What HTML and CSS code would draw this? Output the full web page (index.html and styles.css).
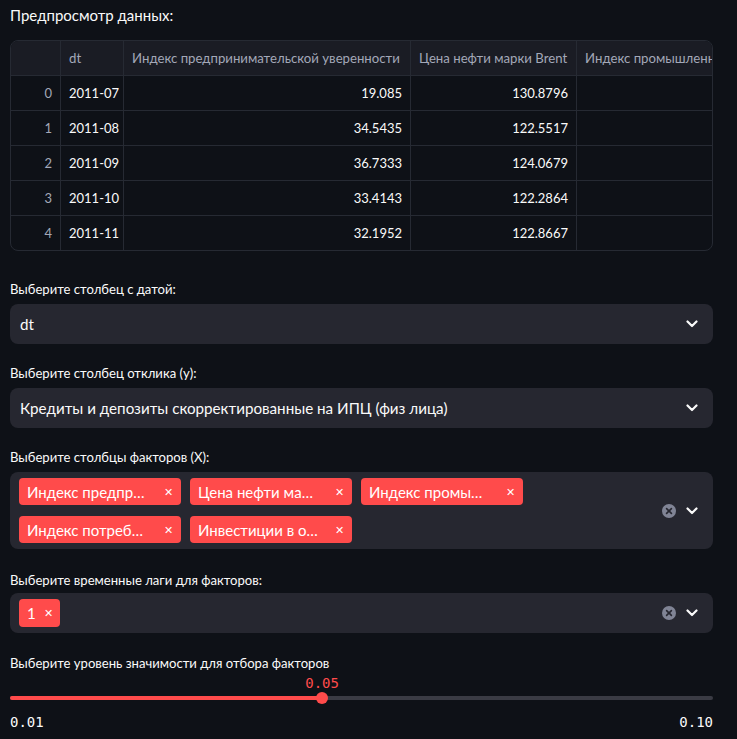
FILE: index.html
```html
<!DOCTYPE html>
<html lang="ru">
<head>
<meta charset="utf-8">
<title>Предпросмотр</title>
<link rel="stylesheet" href="styles.css">
</head>
<body>
<main class="page">
  <p class="title">Предпросмотр данных:</p>

  <div class="table">
    <div class="row head">
      <div class="cell idx"></div>
      <div class="cell c-dt">dt</div>
      <div class="cell c-a">Индекс предпринимательской уверенности</div>
      <div class="cell c-b">Цена нефти марки Brent</div>
      <div class="cell c-c">Индекс промышленного производства</div>
    </div>
    <div class="row"><div class="cell idx">0</div><div class="cell c-dt">2011-07</div><div class="cell c-a num">19.085</div><div class="cell c-b num">130.8796</div><div class="cell c-c"></div></div>
    <div class="row"><div class="cell idx">1</div><div class="cell c-dt">2011-08</div><div class="cell c-a num">34.5435</div><div class="cell c-b num">122.5517</div><div class="cell c-c"></div></div>
    <div class="row"><div class="cell idx">2</div><div class="cell c-dt">2011-09</div><div class="cell c-a num">36.7333</div><div class="cell c-b num">124.0679</div><div class="cell c-c"></div></div>
    <div class="row"><div class="cell idx">3</div><div class="cell c-dt">2011-10</div><div class="cell c-a num">33.4143</div><div class="cell c-b num">122.2864</div><div class="cell c-c"></div></div>
    <div class="row last"><div class="cell idx">4</div><div class="cell c-dt">2011-11</div><div class="cell c-a num">32.1952</div><div class="cell c-b num">122.8667</div><div class="cell c-c"></div></div>
  </div>

  <section class="field f1">
    <label class="label">Выберите столбец с датой:</label>
    <div class="select">
      <span class="value">dt</span>
      <svg class="chev" width="12" height="8" viewBox="0 0 12 8"><path d="M1.5 1.5 6 6l4.5-4.5" fill="none" stroke="#fafafa" stroke-width="2.2" stroke-linecap="round" stroke-linejoin="round"/></svg>
    </div>
  </section>

  <section class="field">
    <label class="label">Выберите столбец отклика (y):</label>
    <div class="select">
      <span class="value">Кредиты и депозиты скорректированные на ИПЦ (физ лица)</span>
      <svg class="chev" width="12" height="8" viewBox="0 0 12 8"><path d="M1.5 1.5 6 6l4.5-4.5" fill="none" stroke="#fafafa" stroke-width="2.2" stroke-linecap="round" stroke-linejoin="round"/></svg>
    </div>
  </section>

  <section class="field">
    <label class="label">Выберите столбцы факторов (X):</label>
    <div class="multi">
      <div class="tags">
        <span class="tag wide"><span class="tag-text">Индекс предпр…</span><span class="x">✕</span></span>
        <span class="tag wide"><span class="tag-text">Цена нефти ма…</span><span class="x">✕</span></span>
        <span class="tag wide"><span class="tag-text">Индекс промы…</span><span class="x">✕</span></span>
        <span class="tag wide"><span class="tag-text">Индекс потреб…</span><span class="x">✕</span></span>
        <span class="tag wide"><span class="tag-text">Инвестиции в о…</span><span class="x">✕</span></span>
      </div>
      <div class="controls">
        <svg class="clear" width="16" height="16" viewBox="0 0 16 16"><circle cx="8" cy="8" r="7" fill="#808495"/><path d="M5.6 5.6l4.8 4.8M10.4 5.6l-4.8 4.8" stroke="#262730" stroke-width="1.6" stroke-linecap="round"/></svg>
        <svg class="chev" width="12" height="8" viewBox="0 0 12 8"><path d="M1.5 1.5 6 6l4.5-4.5" fill="none" stroke="#fafafa" stroke-width="2.2" stroke-linecap="round" stroke-linejoin="round"/></svg>
      </div>
    </div>
  </section>

  <section class="field f4">
    <label class="label">Выберите временные лаги для факторов:</label>
    <div class="multi">
      <div class="tags">
        <span class="tag small"><span class="tag-text">1</span><span class="x">✕</span></span>
      </div>
      <div class="controls">
        <svg class="clear" width="16" height="16" viewBox="0 0 16 16"><circle cx="8" cy="8" r="7" fill="#808495"/><path d="M5.6 5.6l4.8 4.8M10.4 5.6l-4.8 4.8" stroke="#262730" stroke-width="1.6" stroke-linecap="round"/></svg>
        <svg class="chev" width="12" height="8" viewBox="0 0 12 8"><path d="M1.5 1.5 6 6l4.5-4.5" fill="none" stroke="#fafafa" stroke-width="2.2" stroke-linecap="round" stroke-linejoin="round"/></svg>
      </div>
    </div>
  </section>

  <section class="field slider-field">
    <label class="label">Выберите уровень значимости для отбора факторов</label>
    <div class="slider">
      <div class="track">
        <div class="fill" style="width: 44.4%"></div>
        <div class="thumb" style="left: 44.4%"><span class="thumb-value">0.05</span></div>
      </div>
      <div class="ticks"><span>0.01</span><span>0.10</span></div>
    </div>
  </section>
</main>
</body>
</html>
```

FILE: styles.css
```css
* { box-sizing: border-box; }
html, body {
  margin: 0;
  padding: 0;
  background: #0e1117;
}
body {
  color: #fafafa;
  font-family: Lato, Roboto, "Noto Sans", sans-serif;
}
.page {
  padding: 0 24px 0 10px;
  display: flex;
  flex-direction: column;
}
.title {
  margin: 3px 0 0;
  font-size: 15px;
  line-height: 24px;
}
.table {
  margin-top: 13px;
  border: 1px solid #262a33;
  border-radius: 8px;
  overflow: hidden;
  font-size: 13px;
}
.row {
  display: grid;
  grid-template-columns: 50px 63px 287px 166px 1fr;
  height: 35px;
  border-bottom: 1px solid #262a33;
}
.row.head {
  height: 35px;
  background: #1a1c24;
  color: #a3a8b8;
  font-size: 13.2px;
}
.row.last { border-bottom: none; height: 34px; }
.cell {
  display: flex;
  align-items: center;
  padding: 0 8px;
  border-right: 1px solid #262a33;
  white-space: nowrap;
  overflow: hidden;
}
.cell.c-c { border-right: none; }
.cell.idx { justify-content: flex-end; color: #a3a8b8; }
.row.head .cell.idx { justify-content: flex-start; }
.cell.num { justify-content: flex-end; }

.field {
  display: flex;
  flex-direction: column;
  margin-top: 19px;
}
.field.f1 { margin-top: 28px; }
.field.f4 { margin-top: 21px; }
.label {
  font-size: 13.1px;
  line-height: 20px;
  margin-bottom: 5px;
}
.field.f4 .label { margin-bottom: 3px; }
.select {
  height: 40px;
  background: #262730;
  border-radius: 8px;
  display: flex;
  align-items: center;
  justify-content: space-between;
  padding: 0 15px 0 10px;
}
.value { font-size: 15.2px; }
.multi {
  background: #262730;
  border-radius: 8px;
  display: flex;
  align-items: center;
  justify-content: space-between;
  padding: 6px 15px 6px 9px;
  min-height: 40px;
}
.tags {
  display: flex;
  flex-wrap: wrap;
  gap: 11px 9px;
  width: 520px;
}
.tag {
  background: #ff4b4b;
  border-radius: 4px;
  height: 27px;
  display: flex;
  align-items: center;
  justify-content: space-between;
  padding: 0 8px 0 8px;
  font-size: 15px;
  color: #fff;
}
.tag.wide { width: 162px; }
.tag.small { width: 41px; height: 28px; }
.x { font-size: 11px; margin-left: 8px; }
.controls {
  display: flex;
  align-items: center;
  gap: 9px;
}
.slider-field { margin-top: 20px; }
.slider {
  padding-top: 18px;
}
.track {
  position: relative;
  height: 4px;
  border-radius: 2px;
  background: #3a3b44;
}
.fill {
  height: 4px;
  border-radius: 2px;
  background: #ff4b4b;
}
.thumb {
  position: absolute;
  top: -4px;
  width: 12px;
  height: 12px;
  margin-left: -6px;
  border-radius: 50%;
  background: #ff4b4b;
}
.thumb-value {
  position: absolute;
  bottom: 13px;
  left: 50%;
  transform: translateX(-50%);
  color: #ff4b4b;
  font-family: "DejaVu Sans Mono", monospace;
  font-size: 14px;
}
.ticks {
  display: flex;
  justify-content: space-between;
  margin-top: 14px;
  font-family: "DejaVu Sans Mono", monospace;
  font-size: 14px;
}
```
